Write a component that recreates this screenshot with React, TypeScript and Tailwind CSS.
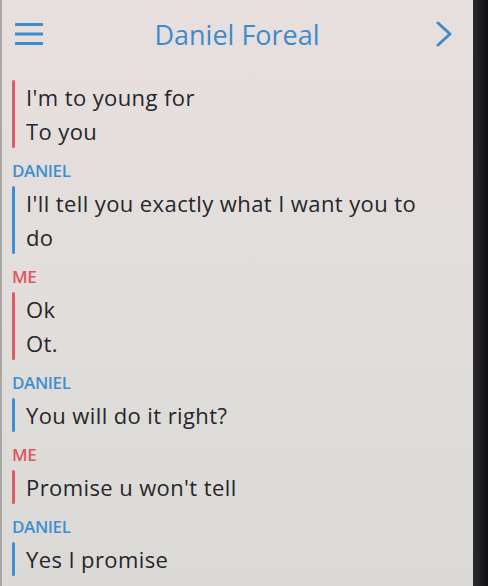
import React from "react";

type Msg = { from: "me" | "daniel"; label: boolean; lines: string[] };

const messages: Msg[] = [
  { from: "me", label: false, lines: ["I'm to young for", "To you"] },
  { from: "daniel", label: true, lines: ["I'll tell you exactly what I want you to", "do"] },
  { from: "me", label: true, lines: ["Ok", "Ot."] },
  { from: "daniel", label: true, lines: ["You will do it right?"] },
  { from: "me", label: true, lines: ["Promise u won't tell"] },
  { from: "daniel", label: true, lines: ["Yes I promise"] },
];

function MenuIcon() {
  return (
    <svg width="28" height="24" viewBox="0 0 28 24" fill="none">
      <path d="M1 2.5h26M1 12h26M1 21.5h26" stroke="#3f8bc9" strokeWidth="3" strokeLinecap="round" />
    </svg>
  );
}

function ChevronIcon() {
  return (
    <svg width="18" height="26" viewBox="0 0 18 26" fill="none">
      <path d="M3 2l12 11L3 24" stroke="#3f8bc9" strokeWidth="3" strokeLinecap="round" strokeLinejoin="round" />
    </svg>
  );
}

export default function App() {
  return (
    <div className="flex w-[488px] h-[586px] overflow-hidden bg-[#141418]">
      {/* Screen */}
      <div
        className="flex-1 flex flex-col bg-gradient-to-b from-[#e7dfde] via-[#e1dedb] to-[#dbdad6] border-l-2 border-[#a9a7a6]"
        style={{ fontFamily: "'Open Sans', Lato, sans-serif" }}
      >
        {/* Header */}
        <div className="h-[78px] flex items-center justify-between pl-[13px] pr-[20px] pb-[10px]">
          <MenuIcon />
          <div className="text-[27px] leading-none text-[#3f8bc9] pr-[4px]">Daniel Foreal</div>
          <ChevronIcon />
        </div>

        {/* Conversation */}
        <div className="flex flex-col pl-[10px] pt-[2px]">
          {messages.map((m, i) => {
            const isMe = m.from === "me";
            return (
              <div key={i} className={m.label ? "mt-[13px]" : ""}>
                {m.label && (
                  <div
                    className={`h-5 leading-5 text-[17px] font-semibold tracking-[-0.4px] mb-[5px] ${
                      isMe ? "text-[#dd5661]" : "text-[#3f8fd0]"
                    }`}
                  >
                    {isMe ? "ME" : "DANIEL"}
                  </div>
                )}
                <div className="flex">
                  <div className={`w-[3px] rounded-full ${isMe ? "bg-[#de5a64]" : "bg-[#3d8fd2]"}`} />
                  <div className="flex flex-col pl-[11px]">
                    {m.lines.map((l, j) => (
                      <div
                        key={j}
                        className="h-[34px] leading-[34px] text-[22px] font-medium tracking-[0.4px] text-[#26262b]"
                      >
                        {l}
                      </div>
                    ))}
                  </div>
                </div>
              </div>
            );
          })}
        </div>
      </div>
      {/* Bezel */}
      <div className="w-[15px] bg-gradient-to-r from-[#2a2a30] to-[#101014]" />
    </div>
  );
}
